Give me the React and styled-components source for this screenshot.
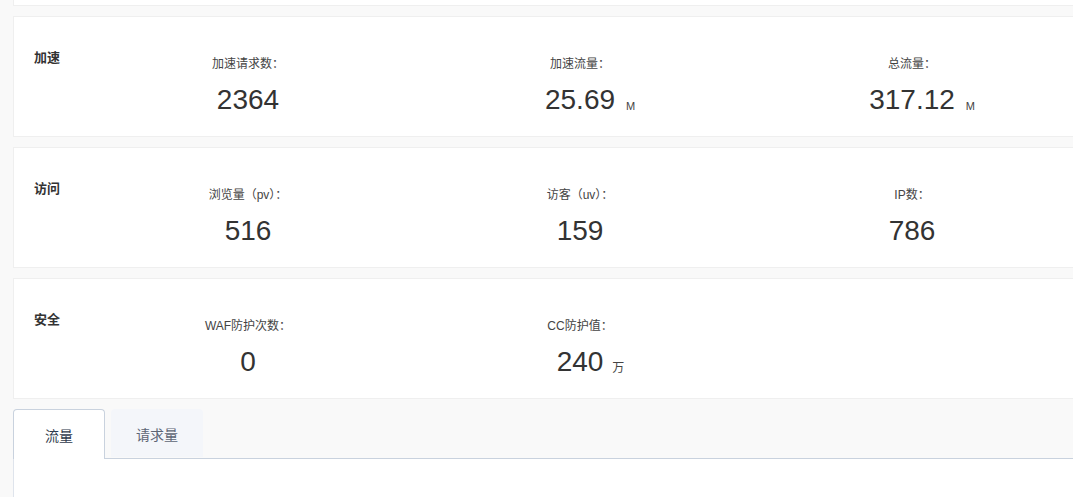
import React from 'react'
import styled, { createGlobalStyle } from 'styled-components'

const GlobalStyle = createGlobalStyle`
  html, body {
    margin: 0;
    padding: 0;
    overflow: hidden;
    background: #f9f9f9;
    font-family: "Liberation Sans", "Noto Sans CJK SC", sans-serif;
    color: #333;
  }
`

// Styled Components
const Page = styled.div`
  width: 1120px;
  padding-left: 13px;
`
const StubCard = styled.div`
  height: 5px;
  background: #fff;
  border: 1px solid #efefef;
  border-top: none;
  margin-bottom: 10px;
`
const Card = styled.div`
  display: flex;
  background: #fff;
  border: 1px solid #efefef;
  padding: 30px 0 18px 20px;
  margin-bottom: 10px;
`
const CardTitle = styled.div`
  width: 48px;
  font-size: 13px;
  line-height: 20px;
  font-weight: bold;
  color: #333;
  font-family: "Noto Sans CJK SC", sans-serif;
`
const Stat = styled.div`
  width: 332px;
  padding-top: 7px;
  display: flex;
  flex-direction: column;
  align-items: center;
`
const Label = styled.div`
  font-size: 12px;
  line-height: 20px;
  color: #444;
  font-family: "Liberation Sans", "Noto Sans CJK SC", sans-serif;
`
const Value = styled.div`
  position: relative;
  margin-top: 8px;
  font-size: 28px;
  line-height: 36px;
  color: #333;
`
const Unit = styled.span`
  position: absolute;
  left: 100%;
  bottom: 5px;
  margin-left: ${p => (p.cjk ? '9px' : '11px')};
  font-size: ${p => (p.cjk ? '12px' : '11px')};
  line-height: 14px;
  color: #444;
  white-space: nowrap;
`
const Tabs = styled.div`
  background: #fff;
  height: 120px;
  border-left: 1px solid #dfe4ec;
`
const TabBar = styled.div`
  display: flex;
  gap: 6px;
  background: #f9f9f9;
  border-bottom: 1px solid #c9d2de;
  height: 49px;
  margin-left: -1px;
`
const Tab = styled.div`
  width: 92px;
  display: flex;
  align-items: center;
  justify-content: center;
  font-size: 14px;
  font-family: "Noto Sans CJK SC", sans-serif;
  box-sizing: border-box;
  border-radius: 4px 4px 0 0;
  background: ${p => (p.active ? '#fff' : '#f4f6fa')};
  color: ${p => (p.active ? '#2f3a4c' : '#5d6575')};
  border: 1px solid ${p => (p.active ? '#c9d2de' : 'transparent')};
  border-bottom: none;
  height: ${p => (p.active ? '50px' : '48px')};
`

const sections = [
  {
    title: '加速',
    stats: [
      { label: '加速请求数：', value: '2364' },
      { label: '加速流量：', value: '25.69', unit: 'M' },
      { label: '总流量：', value: '317.12', unit: 'M' },
    ],
  },
  {
    title: '访问',
    stats: [
      { label: '浏览量（pv）：', value: '516' },
      { label: '访客（uv）：', value: '159' },
      { label: 'IP数：', value: '786' },
    ],
  },
  {
    title: '安全',
    stats: [
      { label: 'WAF防护次数：', value: '0' },
      { label: 'CC防护值：', value: '240', unit: '万', cjk: true },
    ],
  },
]

const App = () => {
  return (
    <Page>
      <GlobalStyle />
      <StubCard />
      {sections.map(s => (
        <Card key={s.title}>
          <CardTitle>{s.title}</CardTitle>
          {s.stats.map(st => (
            <Stat key={st.label}>
              <Label>{st.label}</Label>
              <Value>
                {st.value}
                {st.unit && <Unit cjk={st.cjk}>{st.unit}</Unit>}
              </Value>
            </Stat>
          ))}
        </Card>
      ))}
      <Tabs>
        <TabBar>
          <Tab active>流量</Tab>
          <Tab>请求量</Tab>
        </TabBar>
      </Tabs>
    </Page>
  )
}
export default App
